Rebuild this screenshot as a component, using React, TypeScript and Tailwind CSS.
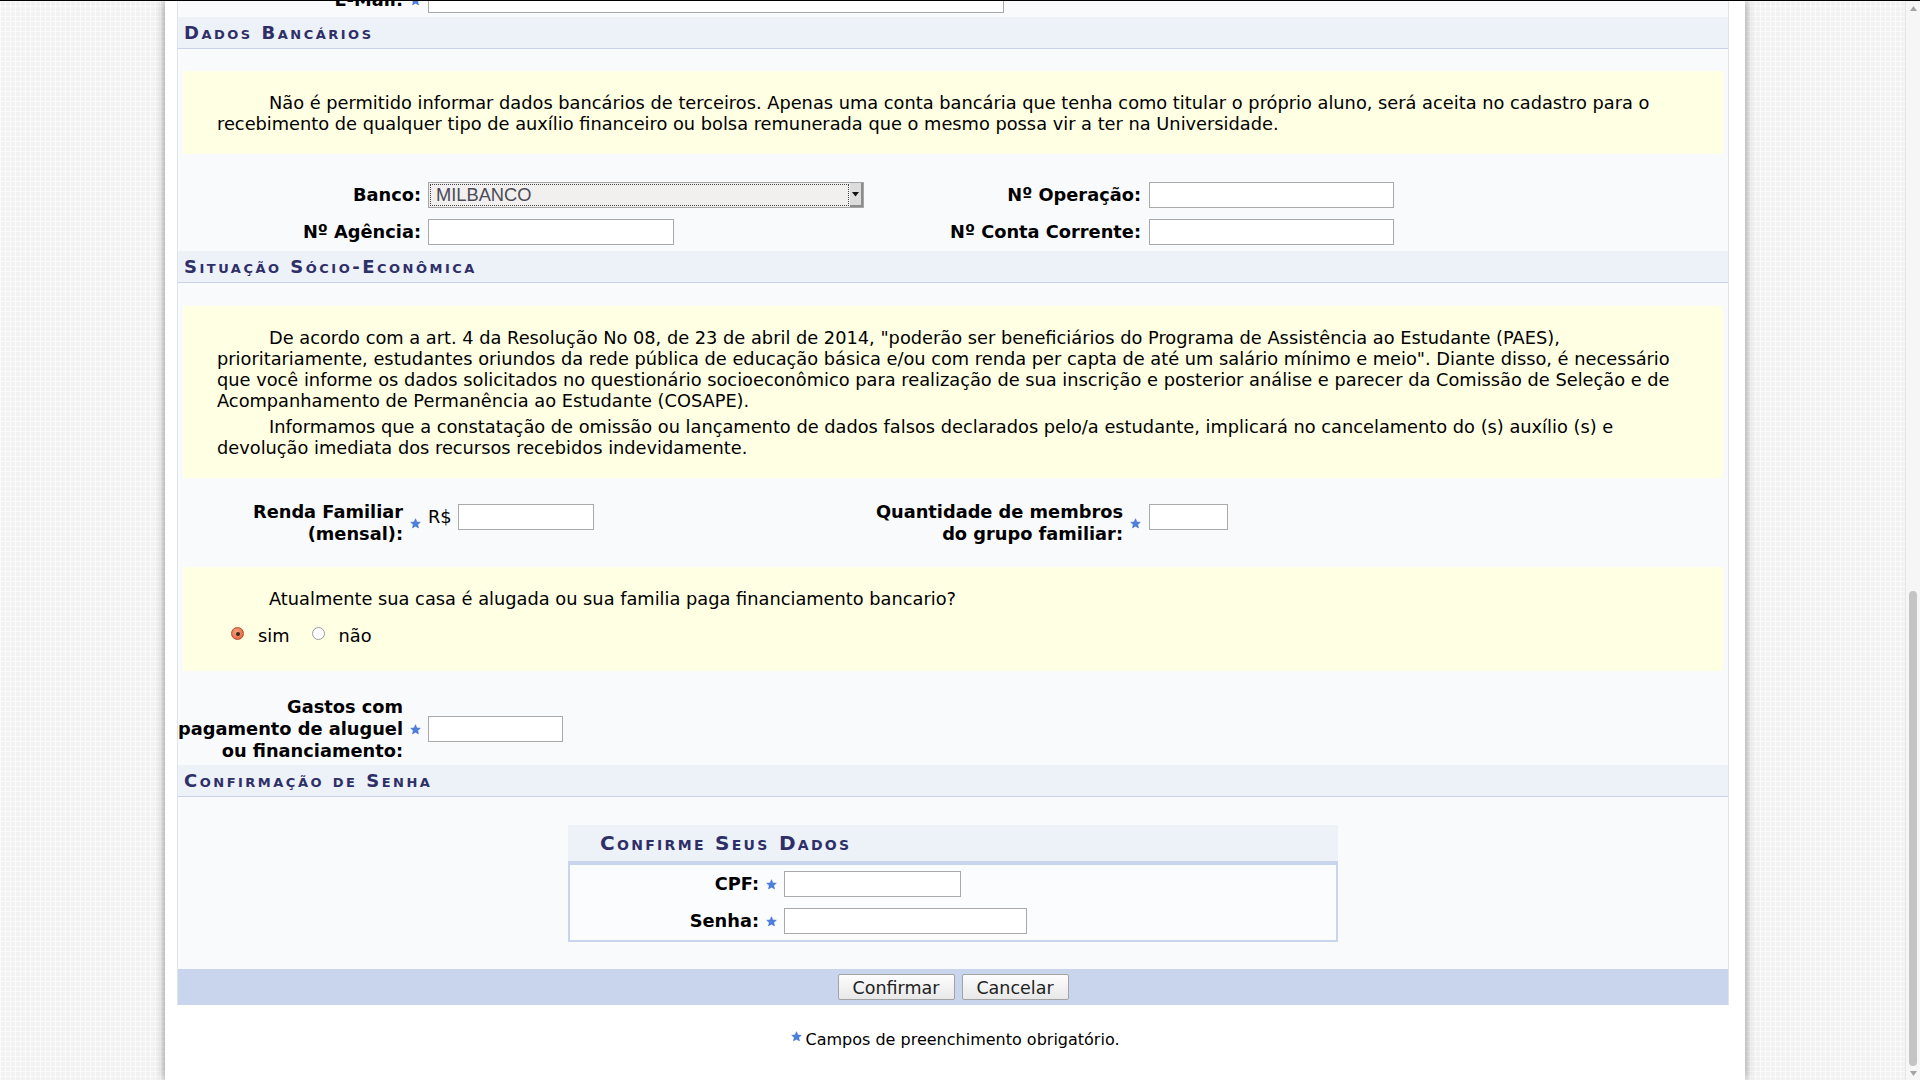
import React from "react";

function Star({ className = "" }: { className?: string }) {
  return (
    <svg width="11" height="11" viewBox="0 0 24 24" className={"shrink-0 " + className}>
      <path
        d="M12 1.5l3.1 7.1 7.4.7-5.6 5 1.7 7.4L12 17.8l-6.6 3.9 1.7-7.4-5.6-5 7.4-.7z"
        fill="#4d7fdc"
        stroke="#3563c4"
        strokeWidth="1"
      />
    </svg>
  );
}

function SectionHeader({ title }: { title: string }) {
  return (
    <div className="h-[32px] bg-[#edf1f8] border-b border-[#c9d3e8] flex items-center pl-[6px] text-[18px] font-bold [font-variant:small-caps] tracking-[2.5px] text-[#2f2f68]">
      {title}
    </div>
  );
}

function Box({ className = "" }: { className?: string }) {
  return <div className={"h-[26px] bg-white border border-[#a9a9a9] " + className} />;
}

export default function App() {
  return (
    <div className="h-[1080px] w-[1920px] overflow-hidden font-['DejaVu_Sans',sans-serif] text-[17.8px] text-black">
      <div className="h-[1px] bg-black" />
      <div className="flex h-[1079px]">
        <div className="flex-1 bg-[#f2f2f2] bg-[linear-gradient(#fafafa_1px,transparent_1px),linear-gradient(90deg,#fafafa_1px,transparent_1px)] bg-[size:5px_5px]">
          <div className="ml-[165px] w-[1580px] h-full bg-white shadow-[0_0_9px_rgba(0,0,0,0.45)] flex flex-col">
            <div className="ml-[12px] mr-[16px] bg-[#f9fafc] border-x border-[#dfe3ea]">
              {/* E-Mail row, cut off by the scroll position */}
              <div className="h-[16px] overflow-hidden">
                <div className="flex items-center h-[26px] -mt-[14px]">
                  <div className="w-[243px] flex items-center justify-end">
                    <span className="font-bold">E-Mail:</span>
                    <Star className="ml-[7px]" />
                  </div>
                  <div className="pl-[7px]">
                    <Box className="w-[576px]" />
                  </div>
                </div>
              </div>

              <SectionHeader title="Dados Bancários" />

              <div className="mx-[5px] mt-[22px] bg-[#ffffe3] pt-[21px] pb-[20px] pl-[34px] leading-[21px]">
                <p className="indent-[52px]">
                  Não é permitido informar dados bancários de terceiros. Apenas uma conta bancária que tenha como titular o próprio aluno, será aceita no cadastro para o
                  <br />
                  recebimento de qualquer tipo de auxílio financeiro ou bolsa remunerada que o mesmo possa vir a ter na Universidade.
                </p>
              </div>

              <div className="flex items-center h-[26px] mt-[28px]">
                <div className="w-[243px] text-right font-bold">Banco:</div>
                <div className="w-[471px] pl-[7px]">
                  <div className="w-[436px] h-[26px] flex bg-[#f1f0ee] border border-[#a5a5a5]">
                    <div className="flex-1 m-[1px] border border-dotted border-[#444] flex items-center pl-[5px] font-['Liberation_Sans',sans-serif] text-[18.3px] text-[#4b4b57]">
                      MILBANCO
                    </div>
                    <div className="w-[13px] bg-[#dcdcdc] border-r-2 border-b-2 border-[#8c8c8c] flex items-center justify-center">
                      <svg width="7" height="5" viewBox="0 0 7 5">
                        <path d="M0 0h7L3.5 4.5z" fill="#111" />
                      </svg>
                    </div>
                  </div>
                </div>
                <div className="w-[249px] text-right font-bold">Nº Operação:</div>
                <div className="pl-[8px]">
                  <Box className="w-[245px]" />
                </div>
              </div>

              <div className="flex items-center h-[26px] mt-[11px]">
                <div className="w-[243px] text-right font-bold">Nº Agência:</div>
                <div className="w-[471px] pl-[7px]">
                  <Box className="w-[246px]" />
                </div>
                <div className="w-[249px] text-right font-bold">Nº Conta Corrente:</div>
                <div className="pl-[8px]">
                  <Box className="w-[245px]" />
                </div>
              </div>

              <div className="mt-[6px]">
                <SectionHeader title="Situação Sócio-Econômica" />
              </div>

              <div className="mx-[5px] mt-[23px] bg-[#ffffe3] pt-[21px] pb-[20px] pl-[34px] leading-[21px]">
                <p className="indent-[52px]">
                  De acordo com a art. 4 da Resolução No 08, de 23 de abril de 2014, "poderão ser beneficiários do Programa de Assistência ao Estudante (PAES),
                  <br />
                  prioritariamente, estudantes oriundos da rede pública de educação básica e/ou com renda per capta de até um salário mínimo e meio". Diante disso, é necessário
                  <br />
                  que você informe os dados solicitados no questionário socioeconômico para realização de sua inscrição e posterior análise e parecer da Comissão de Seleção e de
                  <br />
                  Acompanhamento de Permanência ao Estudante (COSAPE).
                </p>
                <p className="indent-[52px] mt-[5px]">
                  Informamos que a constatação de omissão ou lançamento de dados falsos declarados pelo/a estudante, implicará no cancelamento do (s) auxílio (s) e
                  <br />
                  devolução imediata dos recursos recebidos indevidamente.
                </p>
              </div>

              <div className="flex items-center h-[44px] mt-[23px]">
                <div className="w-[243px] flex items-center justify-end">
                  <span className="text-right font-bold leading-[22px] whitespace-nowrap">
                    Renda Familiar
                    <br />
                    (mensal):
                  </span>
                  <Star className="ml-[7px]" />
                </div>
                <div className="w-[471px] pl-[7px] flex items-center -mt-[12px]">
                  <span>R$</span>
                  <Box className="ml-[6px] w-[136px]" />
                </div>
                <div className="w-[249px] flex items-center justify-end">
                  <span className="text-right font-bold leading-[22px] whitespace-nowrap">
                    Quantidade de membros
                    <br />
                    do grupo familiar:
                  </span>
                  <Star className="ml-[7px]" />
                </div>
                <div className="pl-[8px] -mt-[12px]">
                  <Box className="w-[79px]" />
                </div>
              </div>

              <div className="mx-[5px] mt-[22px] h-[104px] bg-[#ffffe3] pt-[21px] pl-[34px] leading-[21px]">
                <p className="indent-[52px]">Atualmente sua casa é alugada ou sua familia paga financiamento bancario?</p>
                <div className="flex items-center h-[21px] mt-[16px] pl-[14px]">
                  <span className="w-[13px] h-[13px] rounded-full border border-[#b5482a] bg-[radial-gradient(circle_at_40%_35%,#f6a27f,#dc5a34)] flex items-center justify-center -mt-[4px]">
                    <span className="w-[4px] h-[4px] rounded-full bg-[#3b2622]" />
                  </span>
                  <span className="ml-[14px]">sim</span>
                  <span className="ml-[22px] w-[13px] h-[13px] rounded-full border border-[#9c9c9c] bg-white -mt-[4px]" />
                  <span className="ml-[14px]">não</span>
                </div>
              </div>

              <div className="flex items-center h-[66px] mt-[25px]">
                <div className="w-[243px] flex items-center justify-end">
                  <span className="text-right font-bold leading-[22px] whitespace-nowrap">
                    Gastos com
                    <br />
                    pagamento de aluguel
                    <br />
                    ou financiamento:
                  </span>
                  <Star className="ml-[7px]" />
                </div>
                <div className="pl-[7px]">
                  <Box className="w-[135px]" />
                </div>
              </div>

              <div className="mt-[3px]">
                <SectionHeader title="Confirmação de Senha" />
              </div>

              <div className="w-[770px] mx-auto mt-[28px]">
                <div className="h-[40px] bg-[#edf1f8] border-b-[4px] border-[#c9d5ec] flex items-center pl-[32px] text-[20px] font-bold [font-variant:small-caps] tracking-[2.3px] text-[#2f2f68]">
                  Confirme Seus Dados
                </div>
                <div className="border-2 border-t-0 border-[#c9d5ec] bg-[#fbfcfe] pt-[6px] pb-[6px]">
                  <div className="flex items-center h-[26px]">
                    <div className="w-[207px] flex items-center justify-end">
                      <span className="font-bold">CPF:</span>
                      <Star className="ml-[7px]" />
                    </div>
                    <div className="pl-[7px]">
                      <Box className="w-[177px]" />
                    </div>
                  </div>
                  <div className="flex items-center h-[26px] mt-[11px]">
                    <div className="w-[207px] flex items-center justify-end">
                      <span className="font-bold">Senha:</span>
                      <Star className="ml-[7px]" />
                    </div>
                    <div className="pl-[7px]">
                      <Box className="w-[243px]" />
                    </div>
                  </div>
                </div>
              </div>

              <div className="mt-[27px] h-[36px] bg-[#c9d5ec] flex items-center justify-center gap-[7px]">
                <button className="w-[117px] h-[26px] border border-[#a3a3a3] rounded-[2px] bg-[linear-gradient(#fdfdfd,#e8e8e8)] text-[17.5px] text-[#222]">
                  Confirmar
                </button>
                <button className="w-[107px] h-[26px] border border-[#a3a3a3] rounded-[2px] bg-[linear-gradient(#fdfdfd,#e8e8e8)] text-[17.5px] text-[#222]">
                  Cancelar
                </button>
              </div>
            </div>

            <div className="mt-[24px] flex items-center justify-center leading-[22px] text-[16px]">
              <Star className="-mt-[8px] mr-[4px]" />
              <span>Campos de preenchimento obrigatório.</span>
            </div>
          </div>
        </div>

        <div className="w-[15px] h-full bg-[#f6f6f6] border-l border-[#e6e6e6] flex flex-col items-center">
          <div className="h-[14px] flex items-center justify-center">
            <svg width="7" height="5" viewBox="0 0 7 5">
              <path d="M0 5h7L3.5 0z" fill="#a3a3a3" />
            </svg>
          </div>
          <div className="flex-1" />
          <div className="w-[8px] h-[475px] rounded-[4px] bg-[#c4c4c4]" />
          <div className="h-[14px] flex items-center justify-center">
            <svg width="7" height="5" viewBox="0 0 7 5">
              <path d="M0 0h7L3.5 5z" fill="#a3a3a3" />
            </svg>
          </div>
        </div>
      </div>
    </div>
  );
}
